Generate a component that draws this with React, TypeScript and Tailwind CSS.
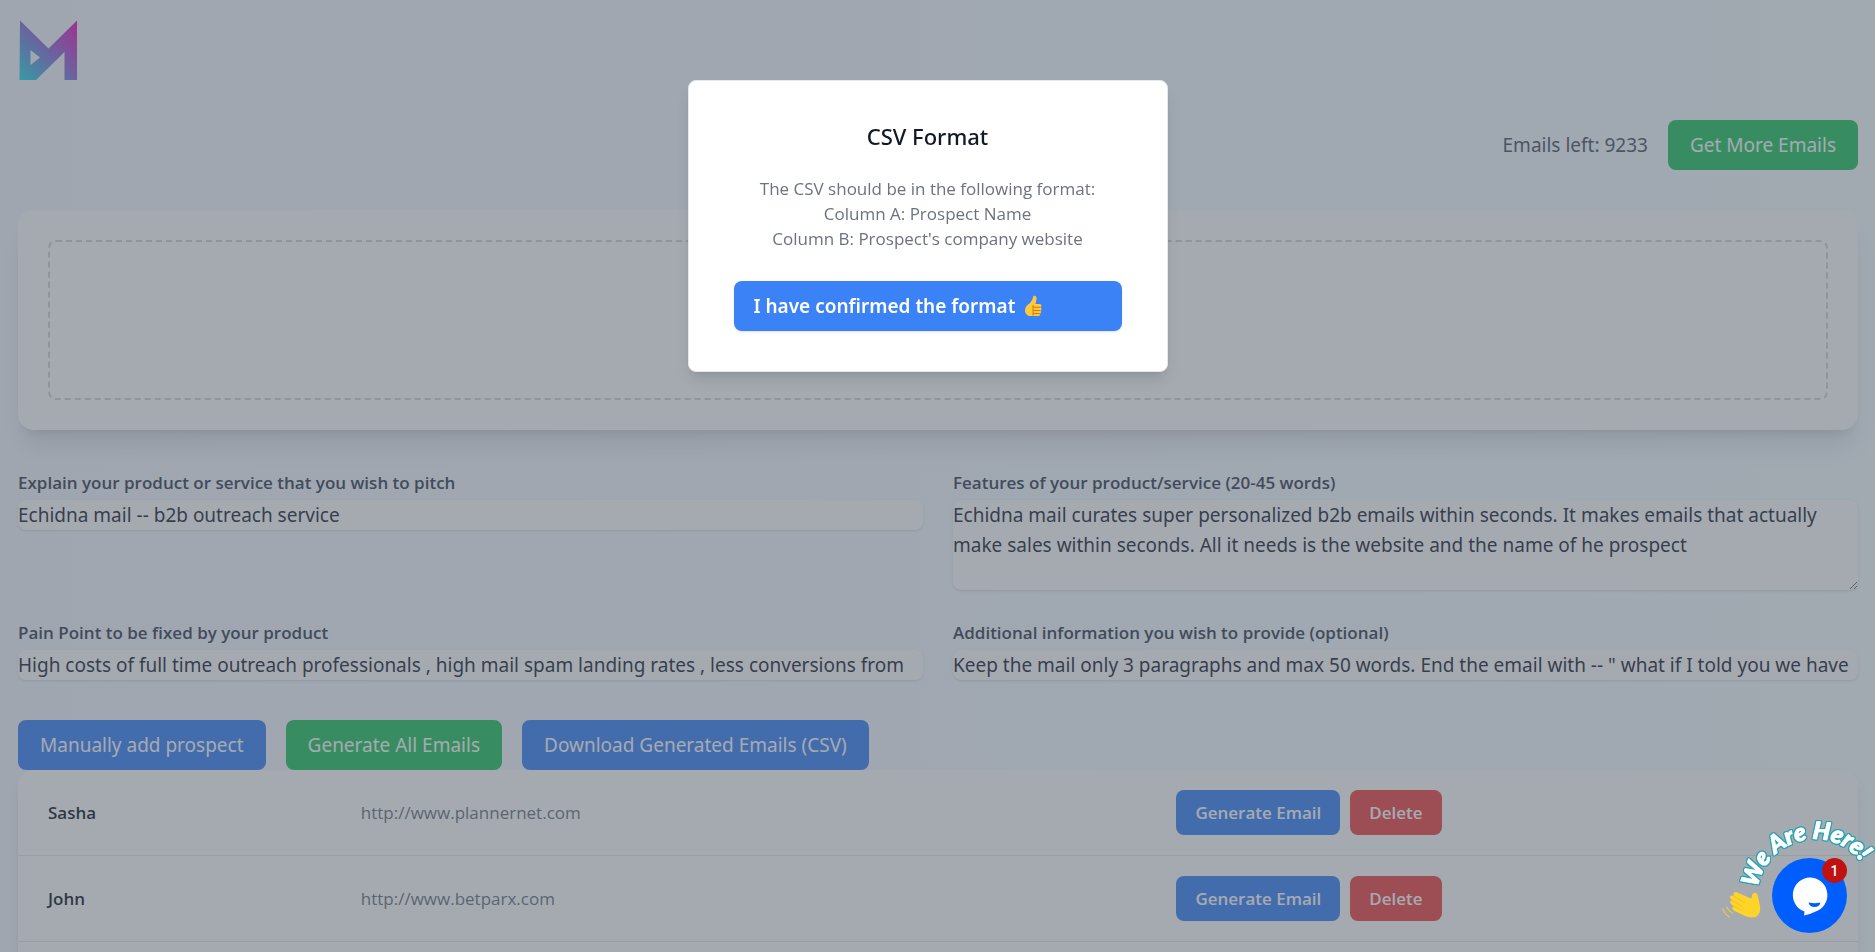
import { useState } from 'react'
import { clsx } from 'clsx'

interface Prospect {
  name: string
  website: string
}

const PROSPECTS: Prospect[] = [
  { name: 'Sasha', website: 'http://www.plannernet.com' },
  { name: 'John', website: 'http://www.betparx.com' },
]

const LABEL = 'mb-[5px] block text-[17px] leading-[25px] font-semibold text-[#374151]'
const FIELD =
  "block w-full rounded-lg bg-white font-['Noto_Sans'] text-[19px] leading-[30px] text-[#1f2937] shadow-sm outline-none"
const BUTTON = "h-[50px] rounded-lg px-[22px] font-['Noto_Sans'] text-[19px] leading-[30px] text-white"
const ROW_BUTTON = 'h-[45px] rounded-lg px-[19px] text-[17px] leading-[25px] font-semibold text-white'

function Logo() {
  return (
    <svg viewBox="0 0 60 60" className="h-[60px] w-[60px]" role="img" aria-label="Logo">
      <defs>
        <linearGradient id="logo" x1="0" y1="1" x2="1" y2="0">
          <stop offset="0" stopColor="#1fe0e8" />
          <stop offset="0.5" stopColor="#8a6fd8" />
          <stop offset="1" stopColor="#f010c0" />
        </linearGradient>
      </defs>
      <path
        fill="url(#logo)"
        fillRule="evenodd"
        d="M2 .5 30.500 28.500 59 .5V60H46.500V32L18 60H1.500ZM12.500 30V45L22 37.500Z"
      />
    </svg>
  )
}

function ThumbsUp() {
  return (
    <svg viewBox="0 0 20 24" className="ml-2 h-[24px] w-[20px]" aria-hidden="true">
      <path
        fill="#ffc83d"
        d="M10.500 2C12.500 1.300 14 3 13.500 5.500L12.500 10H16.500C18.500 10 19 12.500 17.500 13.200 19 14 18.700 16 17.500 16.500 18.600 17.500 18 19.300 17 19.600 17.600 21 16.700 22 15.500 22H8C4.500 22 2 20 2 16.500 2 13 4 11 6.500 9.500 8.500 8 9.600 5 10.500 2Z"
      />
      <path
        fill="none"
        stroke="#d67d00"
        strokeWidth="1"
        d="M10 11V21.500M10 13.300H17.500M10 16.500H17.500M10 19.600H17"
      />
    </svg>
  )
}

function ChatWidget() {
  return (
    <div className="fixed right-0 bottom-0 h-[140px] w-[160px]">
      <svg viewBox="0 0 160 140" className="h-full w-full">
        <path id="greeting" d="M42 85A58 58 0 0 1 158 85" fill="none" />
        <text
          className="font-['Lato'] text-[24px] font-black italic [filter:drop-shadow(1px_0_0_#2ba3b0)_drop-shadow(-1px_0_0_#2ba3b0)_drop-shadow(0_1px_0_#2ba3b0)_drop-shadow(0_-1px_0_#2ba3b0)]"
          fill="#ffffff"
          stroke="#ffffff"
          strokeWidth="1"
          strokeLinejoin="round"
        >
          <textPath href="#greeting" startOffset="9">
            We Are Here!
          </textPath>
        </text>
        {/* waving hand */}
        <g transform="translate(0 73) scale(.333)">
          <path
            fill="#ffd42a"
            d="M65 22 104 39C112 42 110 34 112 29 116 21 126 22 128 31L135 62C138 80 131 95 116 97 104 98 94 96 84 90L57 77C49 73 51 64 58 65L49 58C43 53 46 45 53 47L47 41C42 35 47 29 54 32L57 33C53 26 59 19 65 22Z"
          />
          <path
            fill="none"
            stroke="#e9b51c"
            strokeWidth="2"
            strokeLinecap="round"
            d="M57 33 88 54M53 47 82 64M58 65 80 76"
          />
          <path
            fill="none"
            stroke="#ffd42a"
            strokeWidth="3"
            strokeLinecap="round"
            d="M35 66Q40 79 52 84M23 71Q28 89 44 97"
          />
        </g>
      </svg>
      <button
        type="button"
        aria-label="Open chat"
        className="absolute right-[28px] bottom-[19px] h-[75px] w-[75px] rounded-full bg-[#005eff]"
      >
        <svg viewBox="0 0 75 75" className="h-full w-full" aria-hidden="true">
          <path
            fill="#fff"
            d="M38 19.500A17.500 17.500 0 0 1 46 52.500Q39 56 32 57.500L32.500 53.500A17.500 17.500 0 0 1 38 19.500Z"
          />
          <path fill="#005eff" d="M36.500 44.500Q43 46 48.500 44.500C47.500 50.500 37.500 50.500 36.500 44.500Z" />
        </svg>
        <span className="absolute top-0 right-0 flex h-[25px] w-[25px] items-center justify-center rounded-full bg-[#c11212] font-['Roboto'] text-[14px] leading-none font-medium text-white">
          1
        </span>
      </button>
    </div>
  )
}

function FormatDialog({ onConfirm }: { onConfirm: () => void }) {
  return (
    <div className="fixed inset-0 flex items-start justify-center bg-[#4b5563]/50 pt-20 pr-5">
      <div
        role="dialog"
        aria-modal="true"
        aria-labelledby="format-title"
        className="w-[480px] rounded-lg border border-[#e5e7eb] bg-white px-[45px] pt-10 pb-10 text-center shadow-lg"
      >
        <h3
          id="format-title"
          className="font-['Noto_Sans'] text-[22px] leading-[30px] font-medium text-[#111827]"
        >
          CSV Format
        </h3>
        <p className="pt-[25px] pb-[30px] text-[17px] leading-[25px] text-[#6b7280]">
          The CSV should be in the following format:
          <br />
          Column A: Prospect Name
          <br />
          Column B: Prospect's company website
        </p>
        <button
          type="button"
          onClick={onConfirm}
          className="flex h-[50px] w-full items-center rounded-lg bg-[#3b82f6] px-5 font-['Noto_Sans'] text-[19px] leading-[30px] font-semibold text-white shadow-sm"
        >
          I have confirmed the format
          <ThumbsUp />
        </button>
      </div>
    </div>
  )
}

export default function App() {
  const [dialogOpen, setDialogOpen] = useState(true)

  return (
    <div className="h-screen overflow-hidden bg-gradient-to-r from-[#f3f7fd] to-[#f6fcff] pr-[17px] pl-[18px] font-['Open_Sans',sans-serif]">
      <header className="pt-5">
        <Logo />
      </header>

      <div className="mt-10 flex items-center justify-end gap-5">
        <span className="font-['Noto_Sans'] text-[19px] leading-[30px] text-[#4b5563]">
          Emails left: 9233
        </span>
        <button type="button" className={clsx(BUTTON, 'bg-[#22c55e]')}>
          Get More Emails
        </button>
      </div>

      <section className="mt-10 rounded-2xl bg-white p-[30px] shadow-xl">
        <div className="h-[160px] rounded-lg border-2 border-dashed border-[#d1d5db]" />
      </section>

      <form className="mt-10 grid grid-cols-2 gap-[30px]">
        <div>
          <label htmlFor="pitch" className={LABEL}>
            Explain your product or service that you wish to pitch
          </label>
          <input id="pitch" className={FIELD} defaultValue="Echidna mail -- b2b outreach service" />
        </div>
        <div>
          <label htmlFor="features" className={LABEL}>
            Features of your product/service (20-45 words)
          </label>
          <textarea
            id="features"
            rows={3}
            className={FIELD}
            defaultValue="Echidna mail curates super personalized b2b emails within seconds. It makes emails that actually make sales within seconds. All it needs is the website and the name of he prospect"
          />
        </div>
        <div>
          <label htmlFor="pain" className={LABEL}>
            Pain Point to be fixed by your product
          </label>
          <input
            id="pain"
            className={FIELD}
            defaultValue="High costs of full time outreach professionals , high mail spam landing rates , less conversions from"
          />
        </div>
        <div>
          <label htmlFor="extra" className={LABEL}>
            Additional information you wish to provide (optional)
          </label>
          <input
            id="extra"
            className={FIELD}
            defaultValue={'Keep the mail only 3 paragraphs and max 50 words. End the email with -- " what if I told you we have'}
          />
        </div>
      </form>

      <div className="mt-10 flex gap-5">
        <button type="button" className={clsx(BUTTON, 'bg-[#3b82f6]')}>
          Manually add prospect
        </button>
        <button type="button" className={clsx(BUTTON, 'bg-[#22c55e]')}>
          Generate All Emails
        </button>
        <button type="button" className={clsx(BUTTON, 'bg-[#3b82f6]')}>
          Download Generated Emails (CSV)
        </button>
      </div>

      <div className="rounded-t-2xl bg-white pb-10 shadow-lg">
        <table className="w-full table-fixed text-left text-[17px] leading-[25px]">
          <colgroup>
            <col className="w-[17%]" />
            <col className="w-[44%]" />
            <col />
          </colgroup>
          <tbody>
            {PROSPECTS.map(p => (
              <tr key={p.name} className="border-b border-[#e5e7eb]">
                <th scope="row" className="px-[30px] font-semibold text-[#111827]">
                  {p.name}
                </th>
                <td className="px-[30px] text-[#6b7280]">{p.website}</td>
                <td className="py-5 pr-[30px] pl-9">
                  <div className="flex gap-[10px]">
                    <button type="button" className={clsx(ROW_BUTTON, 'bg-[#3b82f6]')}>
                      Generate Email
                    </button>
                    <button type="button" className={clsx(ROW_BUTTON, 'bg-[#ef4444]')}>
                      Delete
                    </button>
                  </div>
                </td>
              </tr>
            ))}
          </tbody>
        </table>
      </div>

      {dialogOpen && <FormatDialog onConfirm={() => setDialogOpen(false)} />}
      <ChatWidget />
    </div>
  )
}
